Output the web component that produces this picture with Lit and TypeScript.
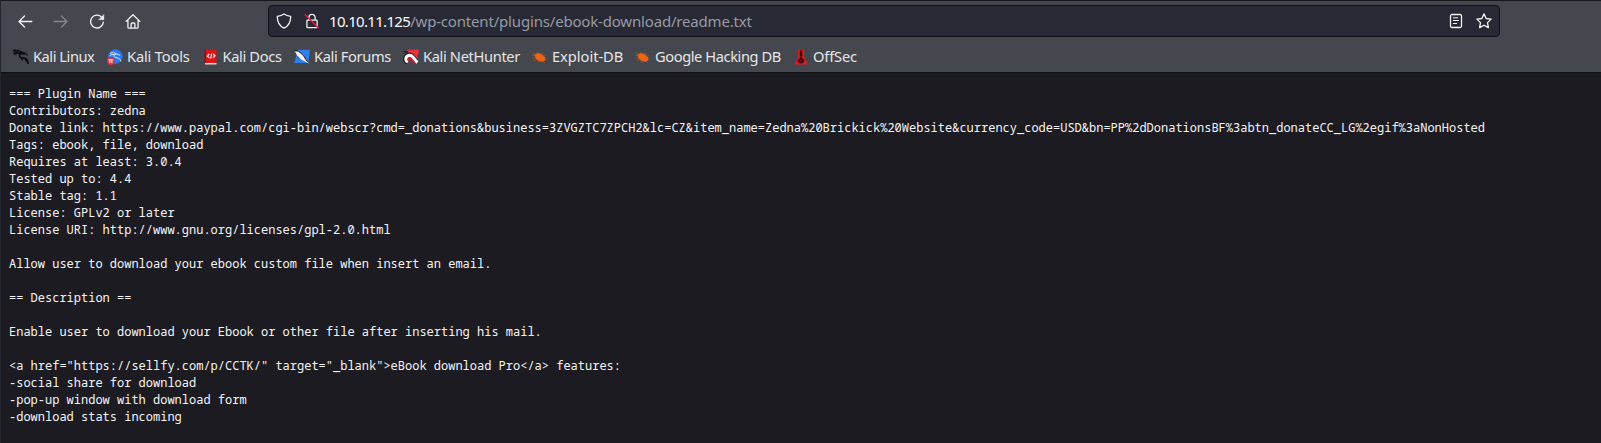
import { LitElement, html, css, svg } from "lit";
import { customElement } from "lit/decorators.js";

const stroke = (body: unknown, cls = "ic") => html`<svg class=${cls} viewBox="0 0 16 16">${body}</svg>`;

const back = svg`<path d="M14.800 8.500H2.200M7.500 3L2 8.500 7.500 14"/>`;
const forward = svg`<path d="M1.200 8.500h12.600M8.500 3L14 8.500 8.500 14"/>`;
const reload = svg`<path d="M14.400 9.100A6.400 6.400 0 1 1 12.600 4.100"/><path class="solid" d="M14.900 1.700v5H9.900z"/>`;
const home = svg`<path d="M1.100 8.400L8 1.700l6.900 6.700M2.900 6.900v7.300q0 .9.9.9h8.400q.9 0 .9-.9V6.900M6.100 14.900V11q0-1 1-1h1.800q1 0 1 1v3.900"/>`;
const shield = svg`<path d="M8 1C6 2.400 3.700 3 1.300 3.300 1.200 8.600 3.200 13 8 15.100c4.800-2.100 6.800-6.500 6.700-11.800C12.300 3 10 2.400 8 1z"/>`;
const lock = svg`<path d="M4.900 7V4.500a3.100 3.100 0 0 1 6.200 0V7M3.700 7.100h8.600q.8 0 .8.800v6q0 .8-.8.800H3.700q-.8 0-.8-.8v-6q0-.8.800-.8z"/><path class="slash" d="M1.200 1.800L14.500 15"/>`;
const reader = svg`<rect x="2.500" y="1.500" width="11" height="13" rx="1.500"/><path d="M5.300 4.800h4.400M5.300 7.500h5.400M5.300 10.500h3.400" stroke-width="1"/>`;
const star = svg`<path d="M8 .9l2.150 4.600 5 .65-3.650 3.500.9 5L8 12.250 3.600 14.650l.9-5L.85 6.150l5-.65z"/>`;

const dragon = svg`<path fill="none" stroke="#0b0c0f" stroke-linecap="round" stroke-linejoin="round" stroke-width="1.700" d="M.8 1.400l4.600.3 3.200 1.500M1.200 5l3.400-1 4.200.6 2.300.3M8.600 3.200Q5.300 5.700 7.300 8.100q1.400 1 3.800 1 3.300.4 4 5"/><path fill="none" stroke="#0b0c0f" stroke-linecap="round" stroke-width="1.200" d="M8.800 3.400l3.700 1 1.700 1.700M4.600 3L.8 3.100M8 9l1.600 2.200M12.500 10.500l1.800 3"/>`;
const tools = svg`<circle cx="8.300" cy="7.600" r="7.300" fill="#2878ef"/><path fill="none" stroke="#d5e6ff" stroke-width="1" d="M3 4.300q3.800-2 6.700.6l3.500 1.500M9.500 5q-4 1.200-1.600 3.300l4 1q1.700 1 1.900 3M2.700 6.500q2-1.500 5-1"/><circle cx="3.700" cy="12" r="3.900" fill="#e92b34"/><path fill="none" stroke="#fff" stroke-width="1" d="M1.400 10.700h4.800M2.800 10.700v3.500M4.900 10.700v3.500"/>`;
const docs = svg`<path fill="#8f1115" d="M1.500.5h2v15h-2z"/><path fill="#dd1518" d="M3 .5h10.500v13.500H3z"/><path fill="#e8dddd" d="M2 14h11.500v1.500H2z"/><path fill="none" stroke="#fff" stroke-width="1.100" d="M6.400 5L4.300 7.200l2.100 1.700M10.200 5l1.800 1.800-2 2.100M8.700 4.600l-1 5"/>`;
const forums = svg`<path fill="#2f7eed" d="M3.800.7h12.200L14.300 14H.4z"/><path fill="#21242a" d="M.3.300l5.500 2.100 4.800 5.100 5.100 7.800-5.200-2.700L4 8.300z"/><path fill="#f1f2f5" d="M.8 2.300l3.800.4 4.500 4 2.900 4.900 3.700 3.500-4.500-2.400-4.200-2.100L3.100 6.500z"/>`;
const net = svg`<path fill="#ed303c" d="M4.200.8H16L13.700 13 7 10z"/><path fill="#25272c" d="M0 2l5.500-.1L2.700 5z"/><path fill="none" stroke="#25272c" stroke-width="5" d="M4.700 13.400C.8 11 2.100 6.200 6.200 6c3.400-.2 3.300 3.200 7.300 6.500"/><path fill="none" stroke="#fff" stroke-width="3.200" d="M4.900 13C1.400 10.800 3 6.700 6.500 6.300c3.500-.4 3.200 3.200 7.900 7.100"/><path fill="none" stroke="#dc1730" stroke-width="2" d="M5.600 11.800C4.800 9.900 5.600 8.600 7 9c1.700.5 2 2.700 4.700 4.600"/>`;
const bug = svg`<g transform="translate(-.8 .5)"><path fill="#ef6414" d="M3.200 4.700l4-1.300 3.900 1.700 2.900 2.800.1 2.800-2.500 1.600-4-.5-3.200-2.700z"/><path fill="none" stroke="#a8572f" stroke-width=".7" d="M4.500 5L1.200 2.800M4 6.200L.8 5.600M4.500 8L1 9.100M6 10l-3.800 1.700M8 11l-1.200 2.300M7 4l-.3-1.700M9.700 5l2.500-1.900M12 7l2.900-1.200M13 9.200l2.500.3M11.700 11.300l1.800 2"/></g>`;
const offsec = svg`<path fill="#e5171c" d="M5 .4h6v8.200l1.700 2.100L14.400 15.600H1.400l2-4.800L5 8.600z"/><path fill="#330509" d="M6.800 1.500h2.400v7.800l2.400 2.100-1.900 2.900H6.300l-1.900-2.900 2.400-2.100z"/><path fill="#b51218" d="M7.500 6.500h1.200v2H7.500zM6.800 11.200h2.400v1.100H6.800z"/>`;

const bookmarks = [
  { icon: dragon, label: "Kali Linux", w: 94, track: -0.46 },
  { icon: tools, label: "Kali Tools", w: 95.5, track: -0.17 },
  { icon: docs, label: "Kali Docs", w: 91.5, track: -0.36 },
  { icon: forums, label: "Kali Forums", w: 109, track: -0.36 },
  { icon: net, label: "Kali NetHunter", w: 129, track: -0.36 },
  { icon: bug, label: "Exploit-DB", w: 103, track: -0.03 },
  { icon: bug, label: "Google Hacking DB", w: 158, track: -0.42 },
  { icon: offsec, label: "OffSec", w: 80, track: -0.16 },
];

const readme = `=== Plugin Name ===
Contributors: zedna
Donate link: https://www.paypal.com/cgi-bin/webscr?cmd=_donations&business=3ZVGZTC7ZPCH2&lc=CZ&item_name=Zedna%20Brickick%20Website&currency_code=USD&bn=PP%2dDonationsBF%3abtn_donateCC_LG%2egif%3aNonHosted
Tags: ebook, file, download
Requires at least: 3.0.4
Tested up to: 4.4
Stable tag: 1.1
License: GPLv2 or later
License URI: http://www.gnu.org/licenses/gpl-2.0.html

Allow user to download your ebook custom file when insert an email.

== Description ==

Enable user to download your Ebook or other file after inserting his mail.

<a href="https://sellfy.com/p/CCTK/" target="_blank">eBook download Pro</a> features:
-social share for download
-pop-up window with download form
-download stats incoming`;

@customElement("app-root")
export class AppRoot extends LitElement {
  static styles = css`
    :host { display: block; height: 443px; box-sizing: border-box; overflow: hidden; background: #1c1b22; border-left: 1px solid #23252e; font-family: "Noto Sans", sans-serif; color: #e6e6e8; }
    .chrome { height: 73px; box-sizing: border-box; background: #44474e; border-top: 1px solid #17181d; border-bottom: 1px solid #0e0f13; }
    .nav { height: 40px; display: flex; align-items: center; padding: 1px 0 0 16px; box-sizing: border-box; }
    .buttons { display: flex; align-items: center; gap: 20px; width: 251px; margin-top: -1px; }
    .ic { width: 16px; height: 16px; flex: none; display: block; fill: none; stroke: #f3f3f4; stroke-width: 1.3; stroke-linecap: round; stroke-linejoin: round; overflow: visible; }
    .ic .solid { fill: #f3f3f4; stroke-width: .4; }
    .ic .slash { stroke: #e21c48; stroke-width: 1.5; }
    .ic.dim { stroke: #85878c; }
    .url { width: 1232px; height: 32px; margin-top: -1px; box-sizing: border-box; border: 1px solid #101116; border-radius: 4px; background: #272935; display: flex; align-items: center; padding: 0 7px; }
    .addr { margin-left: 9px; flex: 1; font-size: 15px; line-height: 20px; color: #999aa2; white-space: pre; letter-spacing: -0.18px; }
    .host { color: #fbfbfe; letter-spacing: -0.68px; }
    .pair { display: flex; gap: 12px; }
    .marks { display: flex; height: 31px; align-items: center; padding-left: 12px; }
    .mark { display: flex; align-items: center; gap: 4px; font-size: 14.67px; line-height: 20px; white-space: nowrap; flex: none; }
    .fav { width: 16px; height: 16px; flex: none; }
    .label { padding-bottom: 2px; }
    .text { margin: 12px 0 0 8px; font: 12px/17px "Noto Sans Mono", "DejaVu Sans Mono", monospace; color: #f5f5f7; }
  `;

  render() {
    return html`
      <div class="chrome">
        <div class="nav">
          <div class="buttons">
            ${stroke(back)}${stroke(forward, "ic dim")}${stroke(reload)}${stroke(home)}
          </div>
          <div class="url">
            <div class="pair">${stroke(shield)}${stroke(lock)}</div>
            <div class="addr"><span class="host">10.10.11.125</span>/wp-content/plugins/ebook-download/readme.txt</div>
            <div class="pair">${stroke(reader)}${stroke(star)}</div>
          </div>
        </div>
        <div class="marks">
          ${bookmarks.map(b => html`<div class="mark" style="width:${b.w}px;letter-spacing:${b.track}px"><svg class="fav" viewBox="0 0 16 16">${b.icon}</svg><span class="label">${b.label}</span></div>`)}
        </div>
      </div>
      <pre class="text">${readme}</pre>
    `;
  }
}
